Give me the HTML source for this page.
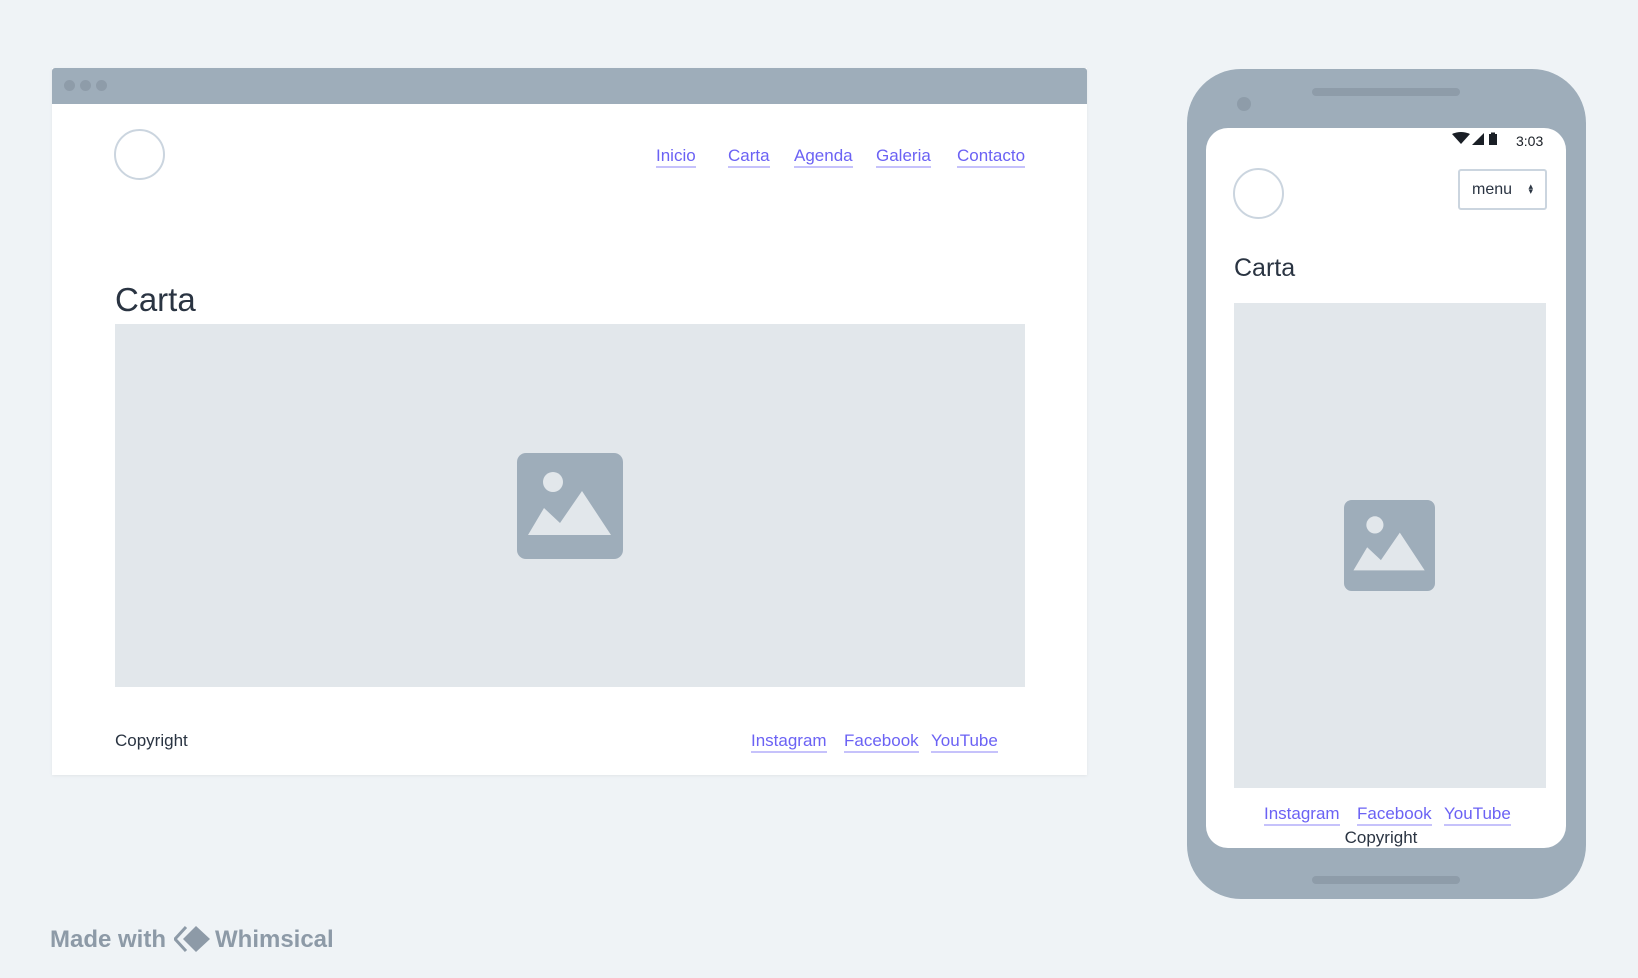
<!DOCTYPE html>
<html><head><meta charset="utf-8"><style>
*{margin:0;padding:0;box-sizing:border-box}
body{width:1638px;height:978px;background:#eff3f6;position:relative;overflow:hidden;font-family:"Liberation Sans",sans-serif;color:#2a3442}
.a{position:absolute}
.lk{position:absolute;color:#6b62f4;font-size:17px;line-height:20px;white-space:nowrap;border-bottom:2px solid #c6c2fb;padding-bottom:0}
.circ{position:absolute;border:2px solid #cbd5df;border-radius:50%;background:#fff}
</style></head><body>
<div class="a" style="left:52px;top:68px;width:1035px;height:707px;background:#fff;box-shadow:0 1px 3px rgba(0,0,0,0.06)"></div>
<div class="a" style="left:52px;top:68px;width:1035px;height:36px;background:#9eadba;border-radius:3px 3px 0 0"></div>
<div class="a" style="left:64px;top:80px;width:11px;height:11px;border-radius:50%;background:#8e9ca9"></div>
<div class="a" style="left:80px;top:80px;width:11px;height:11px;border-radius:50%;background:#8e9ca9"></div>
<div class="a" style="left:96px;top:80px;width:11px;height:11px;border-radius:50%;background:#8e9ca9"></div>
<div class="circ" style="left:114px;top:129px;width:51px;height:51px"></div>
<span class="lk" style="left:656px;top:146px">Inicio</span>
<span class="lk" style="left:728px;top:146px">Carta</span>
<span class="lk" style="left:794px;top:146px">Agenda</span>
<span class="lk" style="left:876px;top:146px">Galeria</span>
<span class="lk" style="left:957px;top:146px">Contacto</span>
<div class="a" style="left:115px;top:280px;font-size:33px;line-height:40px">Carta</div>
<div class="a" style="left:115px;top:324px;width:910px;height:363px;background:#e2e7eb"></div>
<svg class="a" style="left:517px;top:453px" width="106" height="106" viewBox="0 0 106 106"><rect width="106" height="106" rx="9" fill="#9eadba"/><circle cx="36" cy="29" r="10" fill="#e2e7eb"/><path d="M11 82 L27 55 L43 70 L65 38 L94 82 Z" fill="#e2e7eb"/></svg>
<div class="a" style="left:115px;top:731px;font-size:17px;line-height:20px">Copyright</div>
<span class="lk" style="left:751px;top:731px">Instagram</span>
<span class="lk" style="left:844px;top:731px">Facebook</span>
<span class="lk" style="left:931px;top:731px">YouTube</span>
<div class="a" style="left:1187px;top:69px;width:399px;height:830px;background:#9eadba;border-radius:54px"></div>
<div class="a" style="left:1312px;top:88px;width:148px;height:8px;background:#8e9ca9;border-radius:4px"></div>
<div class="a" style="left:1312px;top:876px;width:148px;height:8px;background:#8e9ca9;border-radius:4px"></div>
<div class="a" style="left:1237px;top:97px;width:14px;height:14px;background:#8e9ca9;border-radius:50%"></div>
<div class="a" style="left:1206px;top:128px;width:360px;height:720px;background:#fff;border-radius:22px"></div>
<svg class="a" style="left:1452px;top:132px" width="56" height="16" viewBox="0 0 56 16"><path d="M0 2 Q9 -2 18 2 L9 12 Z" fill="#1a1f26"/><path d="M20 13 L32 1 L32 13 Z" fill="#1a1f26"/><rect x="37" y="2" width="8" height="11" fill="#1a1f26"/><rect x="39" y="0.5" width="4" height="2" fill="#1a1f26"/></svg>
<div class="a" style="left:1516px;top:133px;font-size:14px;line-height:16px;color:#1a1f26">3:03</div>
<div class="circ" style="left:1233px;top:168px;width:51px;height:51px"></div>
<div class="a" style="left:1458px;top:169px;width:89px;height:41px;border:2px solid #cbd5df;border-radius:3px;font-size:16px;line-height:37px;padding-left:12px">menu<span style="position:absolute;right:12px;font-size:9px;line-height:5px;top:13px">▴<br>▾</span></div>
<div class="a" style="left:1234px;top:253px;font-size:25px;line-height:30px">Carta</div>
<div class="a" style="left:1234px;top:303px;width:312px;height:485px;background:#e2e7eb"></div>
<svg class="a" style="left:1344px;top:500px" width="91" height="91" viewBox="0 0 106 106"><rect width="106" height="106" rx="9" fill="#9eadba"/><circle cx="36" cy="29" r="10" fill="#e2e7eb"/><path d="M11 82 L27 55 L43 70 L65 38 L94 82 Z" fill="#e2e7eb"/></svg>
<span class="lk" style="left:1264px;top:804px">Instagram</span>
<span class="lk" style="left:1357px;top:804px">Facebook</span>
<span class="lk" style="left:1444px;top:804px">YouTube</span>
<div class="a" style="left:1300px;top:828px;width:162px;text-align:center;font-size:17px;line-height:20px">Copyright</div>
<div class="a" style="left:50px;top:925px;font-size:24px;line-height:30px;color:#8d9aa7;font-weight:bold">Made with</div>
<svg class="a" style="left:174px;top:925px" width="38" height="28" viewBox="0 0 38 28"><path d="M12 2 L1 14 L12 26" stroke="#8d9aa7" stroke-width="3" fill="none"/><path d="M22 1 L36 14 L22 27 L9 14 Z" fill="#8d9aa7"/></svg>
<div class="a" style="left:215px;top:925px;font-size:24px;line-height:30px;color:#8d9aa7;font-weight:bold">Whimsical</div>
</body></html>
